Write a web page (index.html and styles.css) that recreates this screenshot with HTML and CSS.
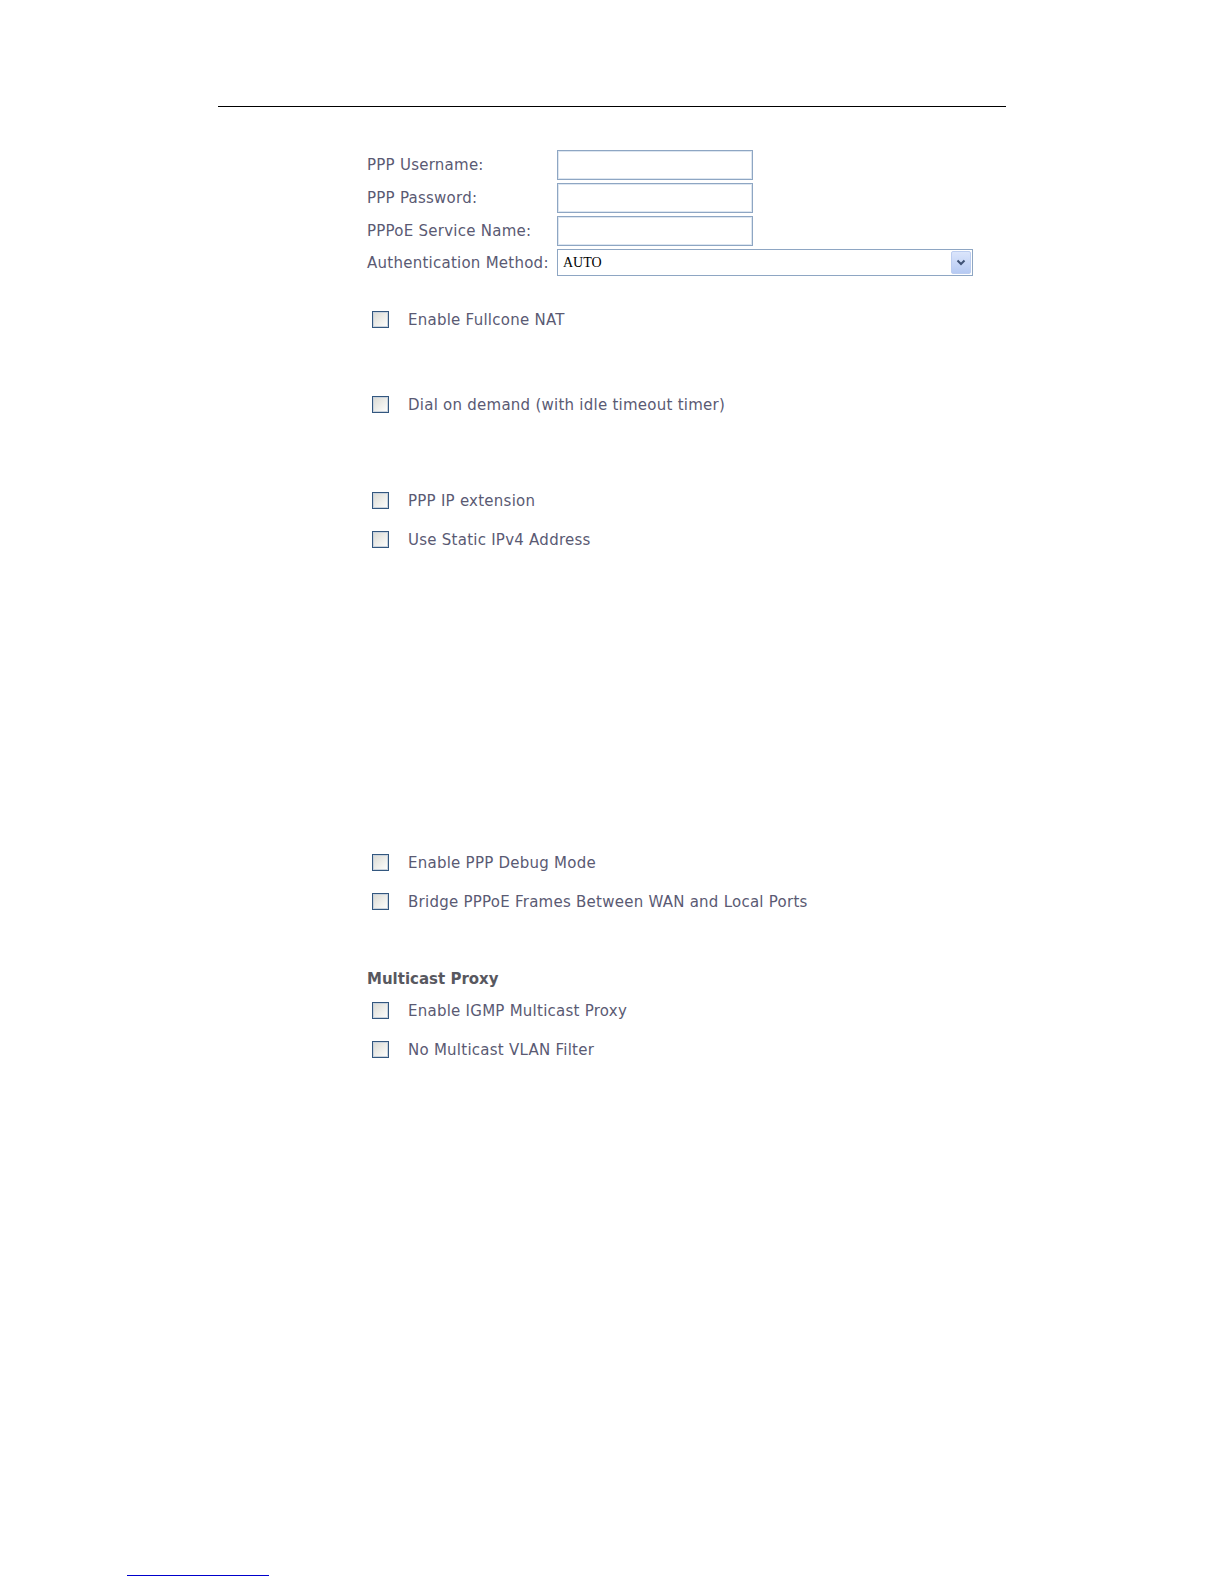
FILE: index.html
```html
<!DOCTYPE html>
<html lang="en">
<head>
  <meta charset="UTF-8" />
  <title>WAN Service - PPPoE</title>
  <link rel="stylesheet" href="styles.css">
</head>
<body>
  <div class="page">
    <div class="sheet">
      <hr class="rule" />
      <form class="wan">
        <div class="fields">
          <label class="field">
            <span class="name">PPP Username:</span>
            <input class="text" type="text" name="pppUser" />
          </label>
          <label class="field">
            <span class="name">PPP Password:</span>
            <input class="text" type="password" name="pppPass" />
          </label>
          <label class="field">
            <span class="name">PPPoE Service Name:</span>
            <input class="text" type="text" name="serviceName" />
          </label>
          <label class="field short">
            <span class="name">Authentication Method:</span>
            <span class="select-wrap">
              <select class="pick" name="authMethod">
                <option value="AUTO">AUTO</option>
                <option value="PAP">PAP</option>
                <option value="CHAP">CHAP</option>
                <option value="MSCHAP">MSCHAP</option>
              </select>
              <span class="arrow">
                <svg width="10" height="7" viewBox="0 0 10 7"><path d="M1.5 1.5 L5 5 L8.5 1.5" fill="none" stroke="#3f5276" stroke-width="2"/></svg>
              </span>
            </span>
          </label>
        </div>

        <label class="check fullcone"><input type="checkbox" name="fullcone" /><span>Enable Fullcone NAT</span></label>
        <label class="check dial"><input type="checkbox" name="dialOnDemand" /><span>Dial on demand (with idle timeout timer)</span></label>
        <label class="check ipext"><input type="checkbox" name="ipExtension" /><span>PPP IP extension</span></label>
        <label class="check"><input type="checkbox" name="staticIp" /><span>Use Static IPv4 Address</span></label>
        <label class="check debug"><input type="checkbox" name="debug" /><span>Enable PPP Debug Mode</span></label>
        <label class="check"><input type="checkbox" name="bridgePppoe" /><span>Bridge PPPoE Frames Between WAN and Local Ports</span></label>

        <h3 class="section">Multicast Proxy</h3>
        <label class="check igmp"><input type="checkbox" name="igmpProxy" /><span>Enable IGMP Multicast Proxy</span></label>
        <label class="check"><input type="checkbox" name="noVlanFilter" /><span>No Multicast VLAN Filter</span></label>
      </form>
    </div>
    <div class="foot"><span class="link-line"></span></div>
  </div>
</body>
</html>
```

FILE: styles.css
```css
body {
  margin: 0;
  background: #fff;
  font-family: "DejaVu Sans", Verdana, sans-serif;
  font-size: 15px;
  letter-spacing: 0.25px;
  color: #5a5a73;
}
.page {
  height: 1585px;
  display: flex;
  flex-direction: column;
}
.sheet {
  margin-left: 218px;
  width: 788px;
  padding-top: 106px;
}
.rule {
  margin: 0;
  height: 0;
  border: 0;
  border-top: 1px solid #000;
}
.wan {
  padding-left: 149px;
  padding-top: 43px;
}
.fields {
  display: flex;
  flex-direction: column;
  gap: 3px;
}
.field {
  display: flex;
  align-items: center;
  height: 30px;
}
.field.short {
  height: 27px;
}
.name {
  width: 190px;
  flex: none;
}
.text {
  width: 196px;
  height: 30px;
  box-sizing: border-box;
  margin: 0;
  padding: 2px 4px;
  border: 1px solid #8ea6c3;
  box-shadow: inset 0 0 0 1px #dde6f0;
}
.select-wrap {
  position: relative;
  display: block;
  width: 416px;
  height: 27px;
}
.pick {
  appearance: none;
  -webkit-appearance: none;
  width: 100%;
  height: 100%;
  margin: 0;
  padding: 0 5px;
  border: 1px solid #8ea6c3;
  border-radius: 0;
  background: #fff;
  font-family: "Liberation Serif", "Times New Roman", serif;
  font-size: 14px;
  letter-spacing: 0;
  color: #000;
}
.arrow {
  position: absolute;
  right: 2px;
  top: 2px;
  width: 20px;
  height: 23px;
  box-sizing: border-box;
  border: 1px solid #bccdf0;
  border-radius: 2px;
  background: linear-gradient(#dbe5fb, #b6caf3);
  display: flex;
  align-items: center;
  justify-content: center;
  pointer-events: none;
}
.check {
  display: flex;
  align-items: center;
  height: 39px;
  padding-left: 5px;
}
.check input {
  appearance: none;
  -webkit-appearance: none;
  flex: none;
  width: 17px;
  height: 17px;
  margin: 0 19px 0 0;
  box-sizing: border-box;
  border: 1px solid #33577f;
  box-shadow: inset 0 0 0 1px #c9d2dc;
  background: linear-gradient(135deg, #d9d9d3, #f4f4f1 70%, #fff);
}
.fullcone { margin-top: 24px; }
.dial { margin-top: 46px; }
.ipext { margin-top: 57px; }
.debug { margin-top: 284px; }
.section {
  margin: 48px 0 0;
  height: 20px;
  line-height: 20px;
  font-size: 15px;
  font-weight: bold;
  letter-spacing: 0;
  color: #58585f;
}
.igmp { margin-top: 2px; }
.foot {
  margin-top: auto;
  padding: 0 0 9px 127px;
}
.link-line {
  display: block;
  width: 142px;
  height: 1px;
  background: #0000cc;
}
```
